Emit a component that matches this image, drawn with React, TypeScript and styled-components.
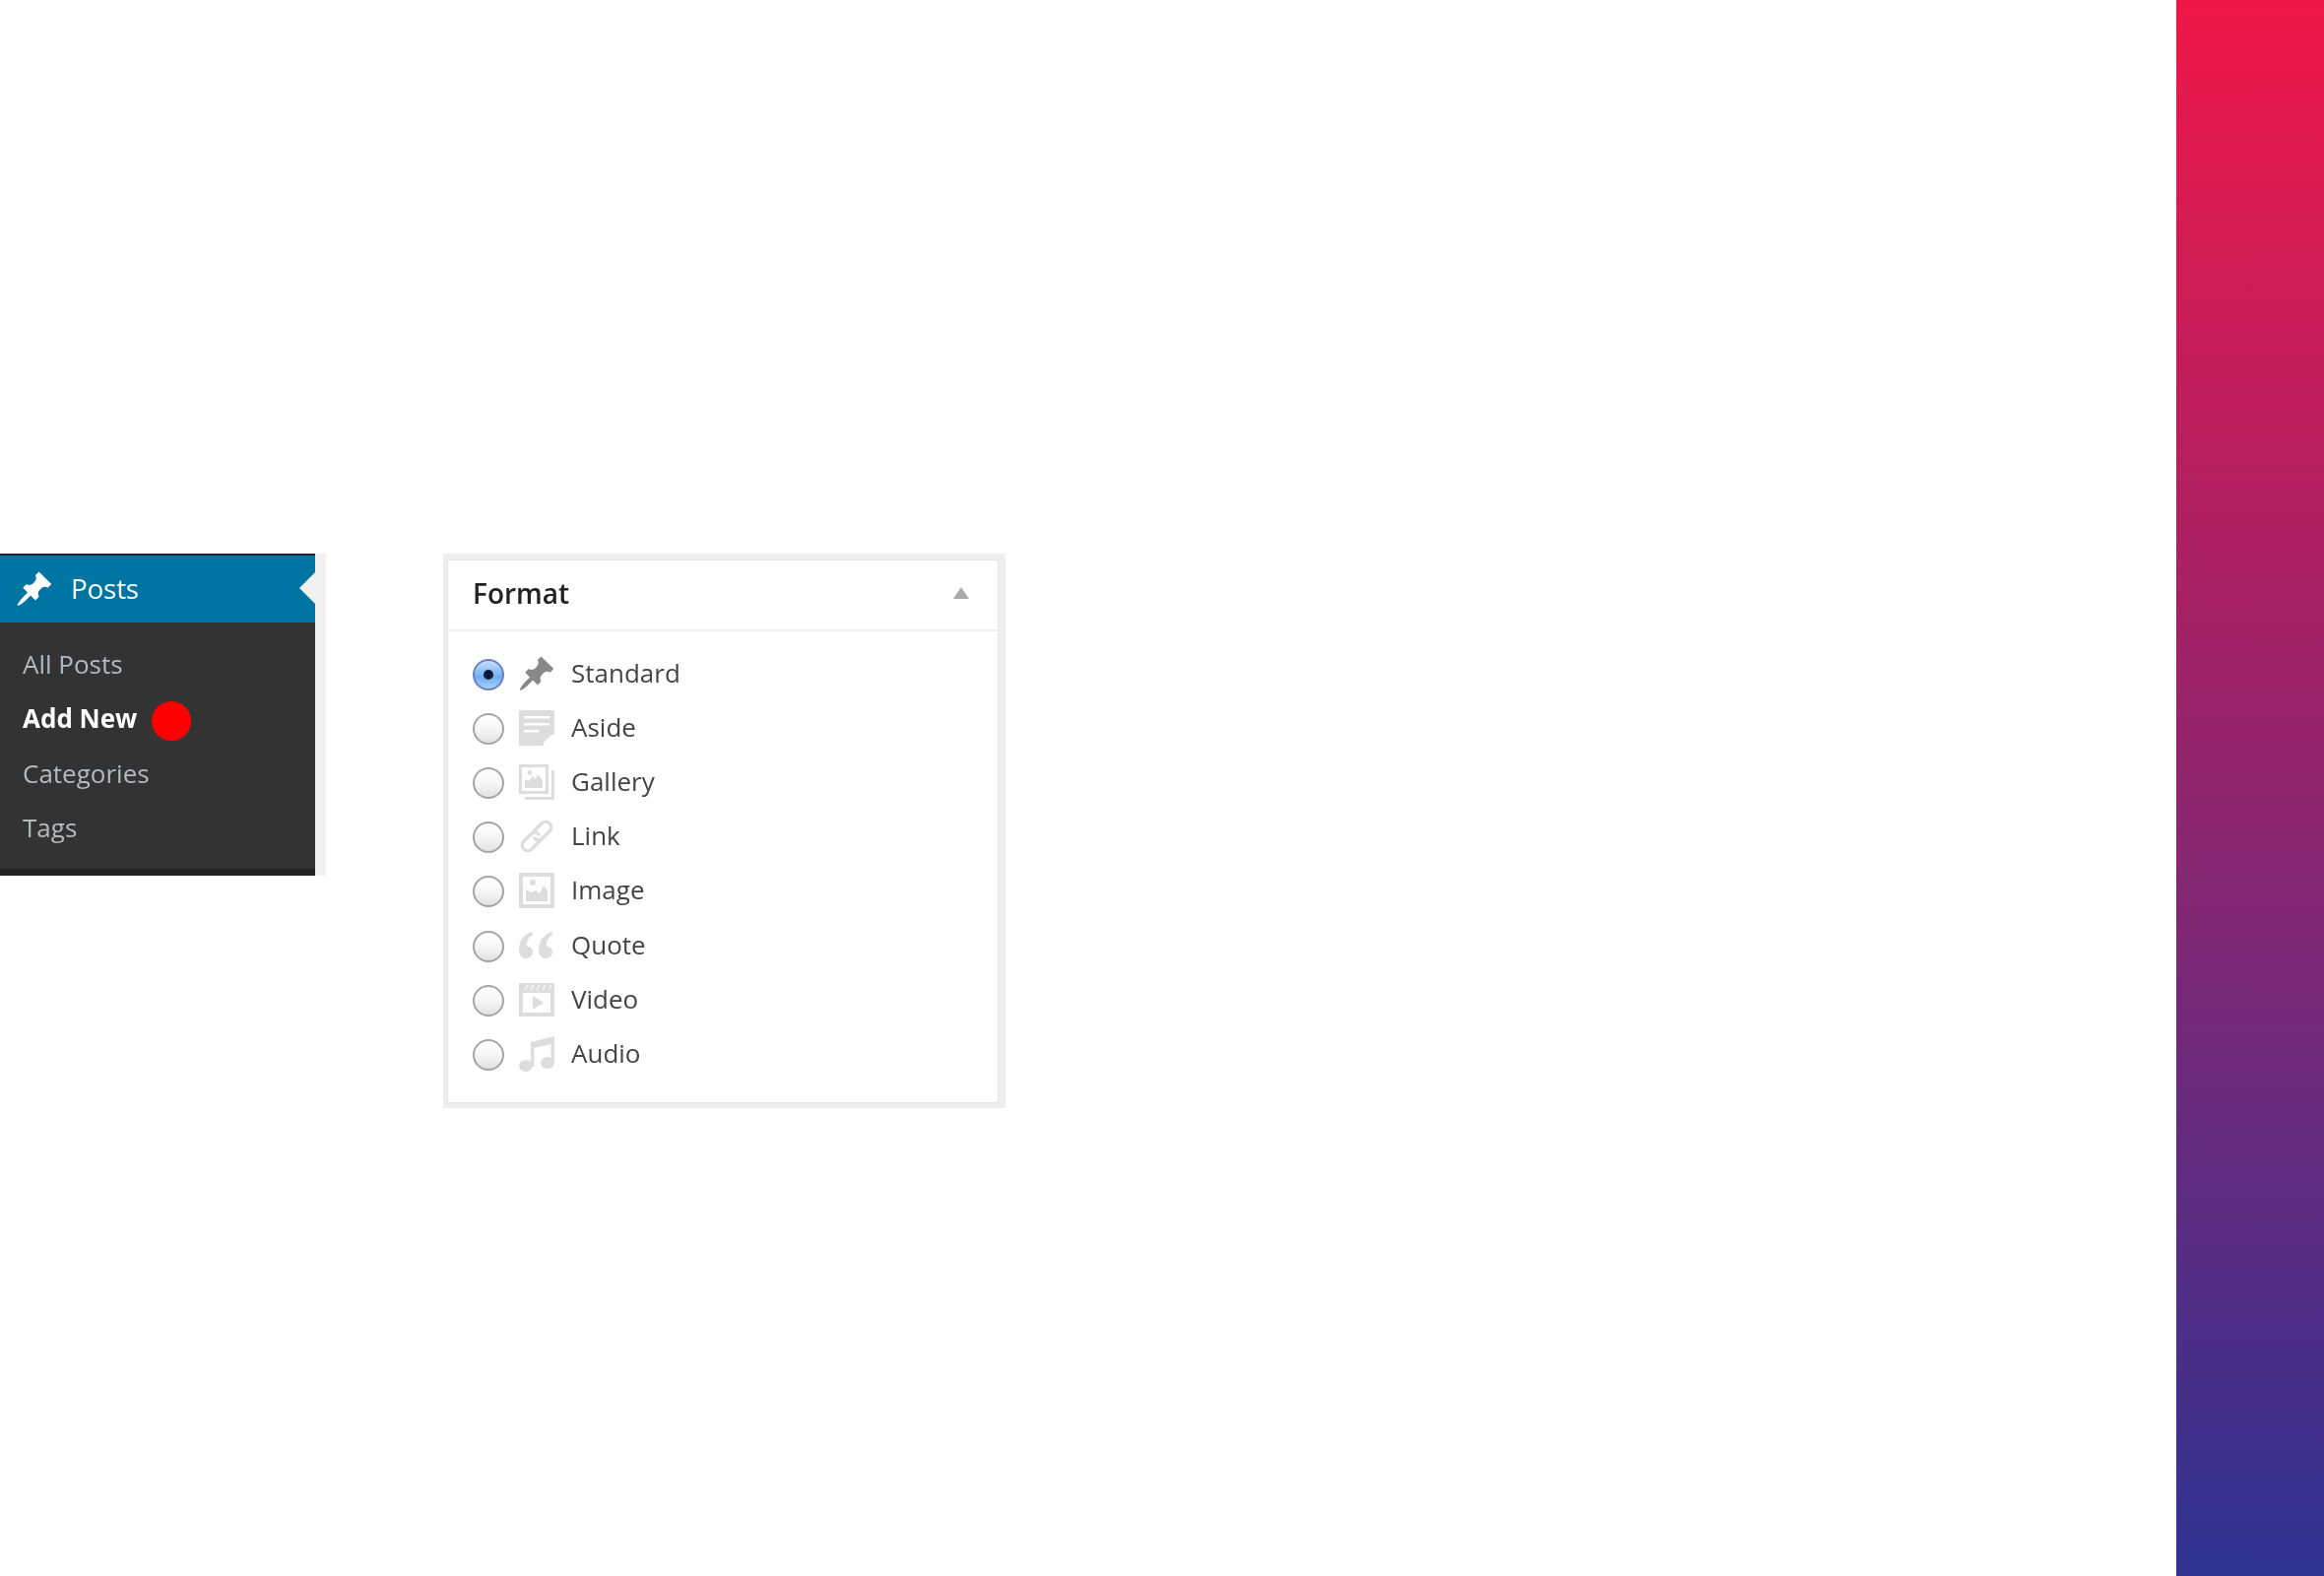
import React from 'react';
import styled, { createGlobalStyle } from 'styled-components';

const GlobalStyle = createGlobalStyle`
  html, body {
    margin: 0;
    padding: 0;
    background: #fff;
    font-family: "Open Sans", "Liberation Sans", sans-serif;
  }
`;

const PinPath =
  'M10.44 3.02l1.82-1.82 6.36 6.35-1.83 1.82c-1.05-.68-2.48-.57-3.41.36l-.75.75c-.92.93-1.04 2.35-.35 3.41l-1.83 1.82-2.41-2.41-2.8 2.79c-.42.42-3.38 2.71-3.8 2.29s1.86-3.39 2.28-3.81l2.79-2.79L4.1 9.36l1.83-1.82c1.05.69 2.48.57 3.4-.36l.75-.75c.93-.92 1.05-2.35.36-3.41z';

const StandardIcon = () => (
  <svg viewBox="0 0 20 20" width="40" height="40">
    <path d={PinPath} fill="#888" />
  </svg>
);

const AsideIcon = () => (
  <svg viewBox="0 0 36 36" width="36" height="36">
    <path
      fillRule="evenodd"
      d="M0 0h36v24L24 36H0zM5 6v2.500h26V6zM5 13v2.500h26V13zM5 20v2.500h15V20z"
      fill="#ddd"
    />
    <path d="M25 25h11L25 36z" fill="#fff" />
    <path d="M24 24h10L24 34z" fill="#ddd" />
  </svg>
);

const GalleryIcon = () => (
  <svg viewBox="0 0 36 36" width="36" height="36">
    <path fillRule="evenodd" d="M0 0h30v30H0zM3 3v24h24V3z" fill="#ddd" />
    <path d="M6 24v-9l4 2 4-5 3 3 2-5 5 6v8z" fill="#ddd" />
    <circle cx="11" cy="8.500" r="2.400" fill="#ddd" />
    <path d="M33 6h3v30H6v-3h27z" fill="#ddd" />
  </svg>
);

const LinkIcon = () => (
  <svg viewBox="0 0 36 36" width="36" height="36" fill="none">
    <path
      d="M15 13l8-8a5.600 5.600 0 0 1 8 8l-8 8a5.600 5.600 0 0 1-7-1M21 23l-8 8a5.600 5.600 0 0 1-8-8l8-8a5.600 5.600 0 0 1 7 1"
      stroke="#ddd"
      strokeWidth="3.400"
      strokeLinecap="round"
    />
  </svg>
);

const ImageIcon = () => (
  <svg viewBox="0 0 36 36" width="36" height="36">
    <path fillRule="evenodd" d="M0 0h36v36H0zM4 4v28h28V4z" fill="#ddd" />
    <path d="M7 29V17l5 3 5-2 4 3 4-8 4 5v11z" fill="#ddd" />
    <circle cx="14" cy="10" r="3" fill="#ddd" />
  </svg>
);

const QuoteIcon = () => (
  <svg viewBox="0 0 36 28" width="36" height="28">
    <path
      d="M13 0C5 3 0 9 0 18c0 5 2.500 9 7 9s7-3 7-6.500-3-6.500-6.500-6C8 9 10 5 14.500 3zM33 0c-8 3-13 9-13 18 0 5 2.500 9 7 9s7-3 7-6.500-3-6.500-6.500-6C28 9 30 5 34.500 3z"
      fill="#ddd"
    />
  </svg>
);

const VideoIcon = () => (
  <svg viewBox="0 0 36 34" width="36" height="34">
    <path fillRule="evenodd" d="M0 0h36v34H0zM4 10v20h28V10z" fill="#ddd" />
    <path d="M6 7l3-5M12 7l3-5M18 7l3-5M24 7l3-5M30 7l3-5" stroke="#f4f4f4" strokeWidth="1.600" />
    <path d="M14 13l11 7-11 7z" fill="#ddd" />
  </svg>
);

const AudioIcon = () => (
  <svg viewBox="0 0 36 36" width="36" height="36">
    <path d="M12 6L36 0v28h-3.500V8L15.500 12v19H12z" fill="#ddd" />
    <ellipse cx="7" cy="30" rx="7" ry="6" fill="#ddd" />
    <ellipse cx="29" cy="27" rx="7" ry="6" fill="#ddd" />
  </svg>
);

const formats = [
  { label: 'Standard', icon: <StandardIcon />, checked: true },
  { label: 'Aside', icon: <AsideIcon /> },
  { label: 'Gallery', icon: <GalleryIcon /> },
  { label: 'Link', icon: <LinkIcon /> },
  { label: 'Image', icon: <ImageIcon /> },
  { label: 'Quote', icon: <QuoteIcon /> },
  { label: 'Video', icon: <VideoIcon /> },
  { label: 'Audio', icon: <AudioIcon /> },
];

export default function App() {
  return (
    <Page>
      <GlobalStyle />
      <Content>
        <MenuFrame>
          <Menu>
            <MenuHead>
              <svg viewBox="0 0 20 20" width="40" height="40">
                <path d={PinPath} fill="#fff" />
              </svg>
              <HeadLabel>Posts</HeadLabel>
              <Notch />
            </MenuHead>
            <SubMenu>
              <SubItem>All Posts</SubItem>
              <SubItem $current>
                Add New
                <RedDot />
              </SubItem>
              <SubItem>Categories</SubItem>
              <SubItem>Tags</SubItem>
            </SubMenu>
            <MenuFoot />
          </Menu>
        </MenuFrame>
        <FormatBox>
          <BoxInner>
            <BoxHead>
              <BoxTitle>Format</BoxTitle>
              <Caret />
            </BoxHead>
            <FormatList>
              {formats.map((f) => (
                <FormatRow key={f.label}>
                  <Radio $checked={f.checked} />
                  <IconSlot>{f.icon}</IconSlot>
                  <FormatLabel>{f.label}</FormatLabel>
                </FormatRow>
              ))}
            </FormatList>
          </BoxInner>
        </FormatBox>
      </Content>
      <GradientBar />
    </Page>
  );
}

const Page = styled.div`
  display: flex;
  width: 2360px;
  height: 1600px;
  overflow: hidden;
  background: #fff;
`;

const Content = styled.div`
  flex: 1;
  display: flex;
  align-items: flex-start;
  gap: 119px;
  padding-top: 562px;
`;

const GradientBar = styled.div`
  width: 150px;
  height: 1600px;
  background: linear-gradient(180deg, #ef1748 0%, #2f3392 100%);
`;

const MenuFrame = styled.div`
  width: 320px;
  height: 327px;
  padding-right: 11px;
  background: #f1f1f1;
  filter: blur(0.6px);
`;

const Menu = styled.div`
  display: flex;
  flex-direction: column;
  height: 100%;
  background: #333;
  border-top: 2px solid #222;
  box-sizing: border-box;
`;

const MenuHead = styled.div`
  position: relative;
  display: flex;
  align-items: center;
  height: 68px;
  padding-left: 15px;
  gap: 17px;
  background: #0074a2;
  flex-shrink: 0;
`;

const HeadLabel = styled.span`
  font-size: 28px;
  color: #fff;
  margin-top: -3px;
  letter-spacing: -0.3px;
`;

const Notch = styled.span`
  position: absolute;
  right: 0;
  top: 17px;
  border: 16px solid transparent;
  border-left: 0;
  border-right: 16px solid #f1f1f1;
`;

const SubMenu = styled.div`
  flex: 1;
  display: flex;
  flex-direction: column;
  padding: 14px 0 0 23px;
`;

const SubItem = styled.div<{ $current?: boolean }>`
  display: flex;
  align-items: center;
  height: 55.500px;
  font-size: 26px;
  font-weight: ${(p) => (p.$current ? 700 : 400)};
  color: ${(p) => (p.$current ? '#fff' : '#b4b9be')};
`;

const RedDot = styled.span`
  width: 40px;
  height: 40px;
  margin-left: 15px;
  margin-top: 6px;
  border-radius: 50%;
  background: #f00;
`;

const MenuFoot = styled.div`
  height: 7px;
  background: #222;
`;

const FormatBox = styled.div`
  width: 571px;
  height: 563px;
  box-sizing: border-box;
  border-style: solid;
  border-color: #eee;
  border-width: 6px 7px 5px 4px;
  filter: blur(0.6px);
`;

const BoxInner = styled.div`
  height: 100%;
  box-sizing: border-box;
  border: 1px solid #e5e5e5;
`;

const BoxHead = styled.div`
  display: flex;
  align-items: center;
  justify-content: space-between;
  height: 72px;
  padding: 0 29px 4px 25px;
  box-sizing: border-box;
  border-bottom: 2px solid #eee;
`;

const BoxTitle = styled.span`
  font-size: 28px;
  font-weight: 600;
  color: #222;
`;

const Caret = styled.span`
  border: 8px solid transparent;
  border-top: 0;
  border-bottom: 12px solid #aaa;
`;

const FormatList = styled.div`
  display: flex;
  flex-direction: column;
  padding-top: 15px;
`;

const FormatRow = styled.div`
  display: flex;
  align-items: center;
  height: 55.200px;
  padding-left: 25px;
`;

const Radio = styled.span<{ $checked?: boolean }>`
  position: relative;
  width: 32px;
  height: 32px;
  box-sizing: border-box;
  border-radius: 50%;
  flex-shrink: 0;
  margin-top: 2px;
  border: 2px solid ${(p) => (p.$checked ? '#6f7fc4' : '#a5a5a5')};
  background: ${(p) =>
    p.$checked
      ? 'linear-gradient(180deg, #c4ddfa 0%, #6fb0f2 60%, #a5d2fb 100%)'
      : 'linear-gradient(180deg, #fff 0%, #f6f6f6 50%, #e2e2e2 100%)'};

  &::after {
    content: '';
    display: ${(p) => (p.$checked ? 'block' : 'none')};
    position: absolute;
    left: 9px;
    top: 9px;
    width: 10px;
    height: 10px;
    border-radius: 50%;
    background: #0c1a3a;
  }
`;

const IconSlot = styled.span`
  display: flex;
  align-items: center;
  justify-content: center;
  width: 40px;
  height: 40px;
  margin-left: 13px;
`;

const FormatLabel = styled.span`
  margin-left: 15px;
  margin-top: -2px;
  font-size: 26px;
  color: #444;
`;
